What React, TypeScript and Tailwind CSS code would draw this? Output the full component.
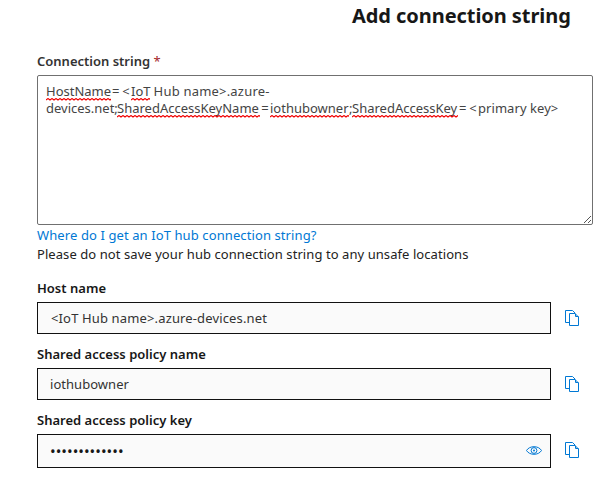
import type { ReactNode } from "react";

const zigzag = "M0 2" + "l2 -1.500l2 1.500".repeat(40);

function Misspelled({ children, className = "" }: { children: ReactNode; className?: string }) {
  return (
    <span className={`relative inline-block ${className}`}>
      {children}
      <svg className="absolute left-0 top-[15px] h-[3px] w-full overflow-hidden" aria-hidden="true">
        <path d={zigzag} fill="none" stroke="#f00000" strokeWidth="1.100" />
      </svg>
    </span>
  );
}

function CopyIcon() {
  return (
    <svg className="ml-[14px] h-4 w-[14px] shrink-0" viewBox="0 0 14 16" fill="none" stroke="#0078d4" aria-hidden="true">
      <path d="M4 12.500H.5V.5H7.500L10 3" />
      <path d="M4.500 3.500H10L13.500 7V15.500H4.500Z" />
      <path d="M10.500 3.500V6.500H13.500" />
    </svg>
  );
}

function EyeIcon() {
  return (
    <svg className="mb-px h-[9px] w-[16px]" viewBox="0 0 16 9" fill="none" stroke="#0078d4" aria-hidden="true">
      <path d="M.5 4.500C2 2 4.800 .700 8 .700S14 2 15.500 4.500C14 7 11.200 8.300 8 8.300S2 7 .500 4.500Z" />
      <circle cx="8" cy="4.500" r="2.900" />
      <circle cx="8" cy="4.500" r="1" fill="#0078d4" stroke="none" />
    </svg>
  );
}

function Field({ label, children, boxClass, action }: { label: string; children: ReactNode; boxClass: string; action?: ReactNode }) {
  return (
    <div>
      <div className="h-5 text-[13px] leading-5 font-semibold tracking-[0.01px] text-[#171717]">{label}</div>
      <div className="mt-1 flex items-start">
        <div className={`flex w-[514px] items-center justify-between border border-[#111] bg-[#fafafa] pr-2 text-[#333] ${boxClass}`}>
          {children}
          {action}
        </div>
        <div className="pt-2">
          <CopyIcon />
        </div>
      </div>
    </div>
  );
}

export default function App() {
  return (
    <main className="h-[481px] w-[600px] overflow-hidden bg-white font-['Noto_Sans','Open_Sans',sans-serif] text-[13px] text-[#222]">
      <h1 className="ml-[352px] h-[51px] pt-[2px] text-[20px] leading-7 font-bold tracking-[-0.06px] whitespace-nowrap text-[#171717]">
        <span>Add connection string</span>
      </h1>
      <div className="ml-[37px] w-[556px]">
        <div className="h-6 text-[13px] leading-5 font-semibold text-[#333]">
          <span>Connection string</span> <span className="font-normal text-[#a4262c]">*</span>
        </div>
        <div className="relative h-[150px] rounded-[2px] border border-[#707070] pt-[7px] pl-2 leading-[17px] whitespace-nowrap text-[#444]">
          <div className="flex whitespace-pre">
            <Misspelled className="w-[65px]">HostName</Misspelled>
            <span className="w-5 pl-px tracking-[2.8px]">=&lt;</span>
            <Misspelled className="w-[19px]">IoT</Misspelled>
            <span className="tracking-[0.2px]"> Hub name&gt;.azure-</span>
          </div>
          <div className="flex whitespace-pre">
            <span className="w-[71px]">devices.net;</span>
            <Misspelled className="w-[143px]">SharedAccessKeyName</Misspelled>
            <span className="w-[10px] text-center">=</span>
            <Misspelled className="w-[79px]">iothubowner</Misspelled>
            <span className="w-[3px]">;</span>
            <Misspelled className="w-[106px]">SharedAccessKey</Misspelled>
            <span className="w-[20px] pl-px tracking-[2.8px]">=&lt;</span>
            <span className="tracking-[0.06px]">primary key&gt;</span>
          </div>
          <svg className="absolute right-[1px] bottom-[1px] h-[7px] w-[7px]" viewBox="0 0 7 7" stroke="#555" aria-hidden="true">
            <path d="M0 7L7 0M4 7L7 4" />
          </svg>
        </div>
        <div className="h-5 leading-5 tracking-[0.1px] text-[#0078d4]"><span>Where do I get an IoT hub connection string?</span></div>
        <div className="h-[33px] leading-[18px] tracking-[0.07px]"><span>Please do not save your hub connection string to any unsafe locations</span></div>
        <div className="flex flex-col gap-[10px]">
          <Field label="Host name" boxClass="h-8 pl-[13px]">
            <span className="pt-px tracking-[0.14px]">&lt;IoT Hub name&gt;.azure-devices.net</span>
          </Field>
          <Field label="Shared access policy name" boxClass="h-8 pl-3">
            <span className="pt-px tracking-[0.04px]">iothubowner</span>
          </Field>
          <Field label="Shared access policy key" boxClass="h-[34px] pl-3" action={<EyeIcon />}>
            <span className="pb-px text-[15px] leading-5 tracking-[0.02px] text-[#171717]">•••••••••••••</span>
          </Field>
        </div>
      </div>
    </main>
  );
}
